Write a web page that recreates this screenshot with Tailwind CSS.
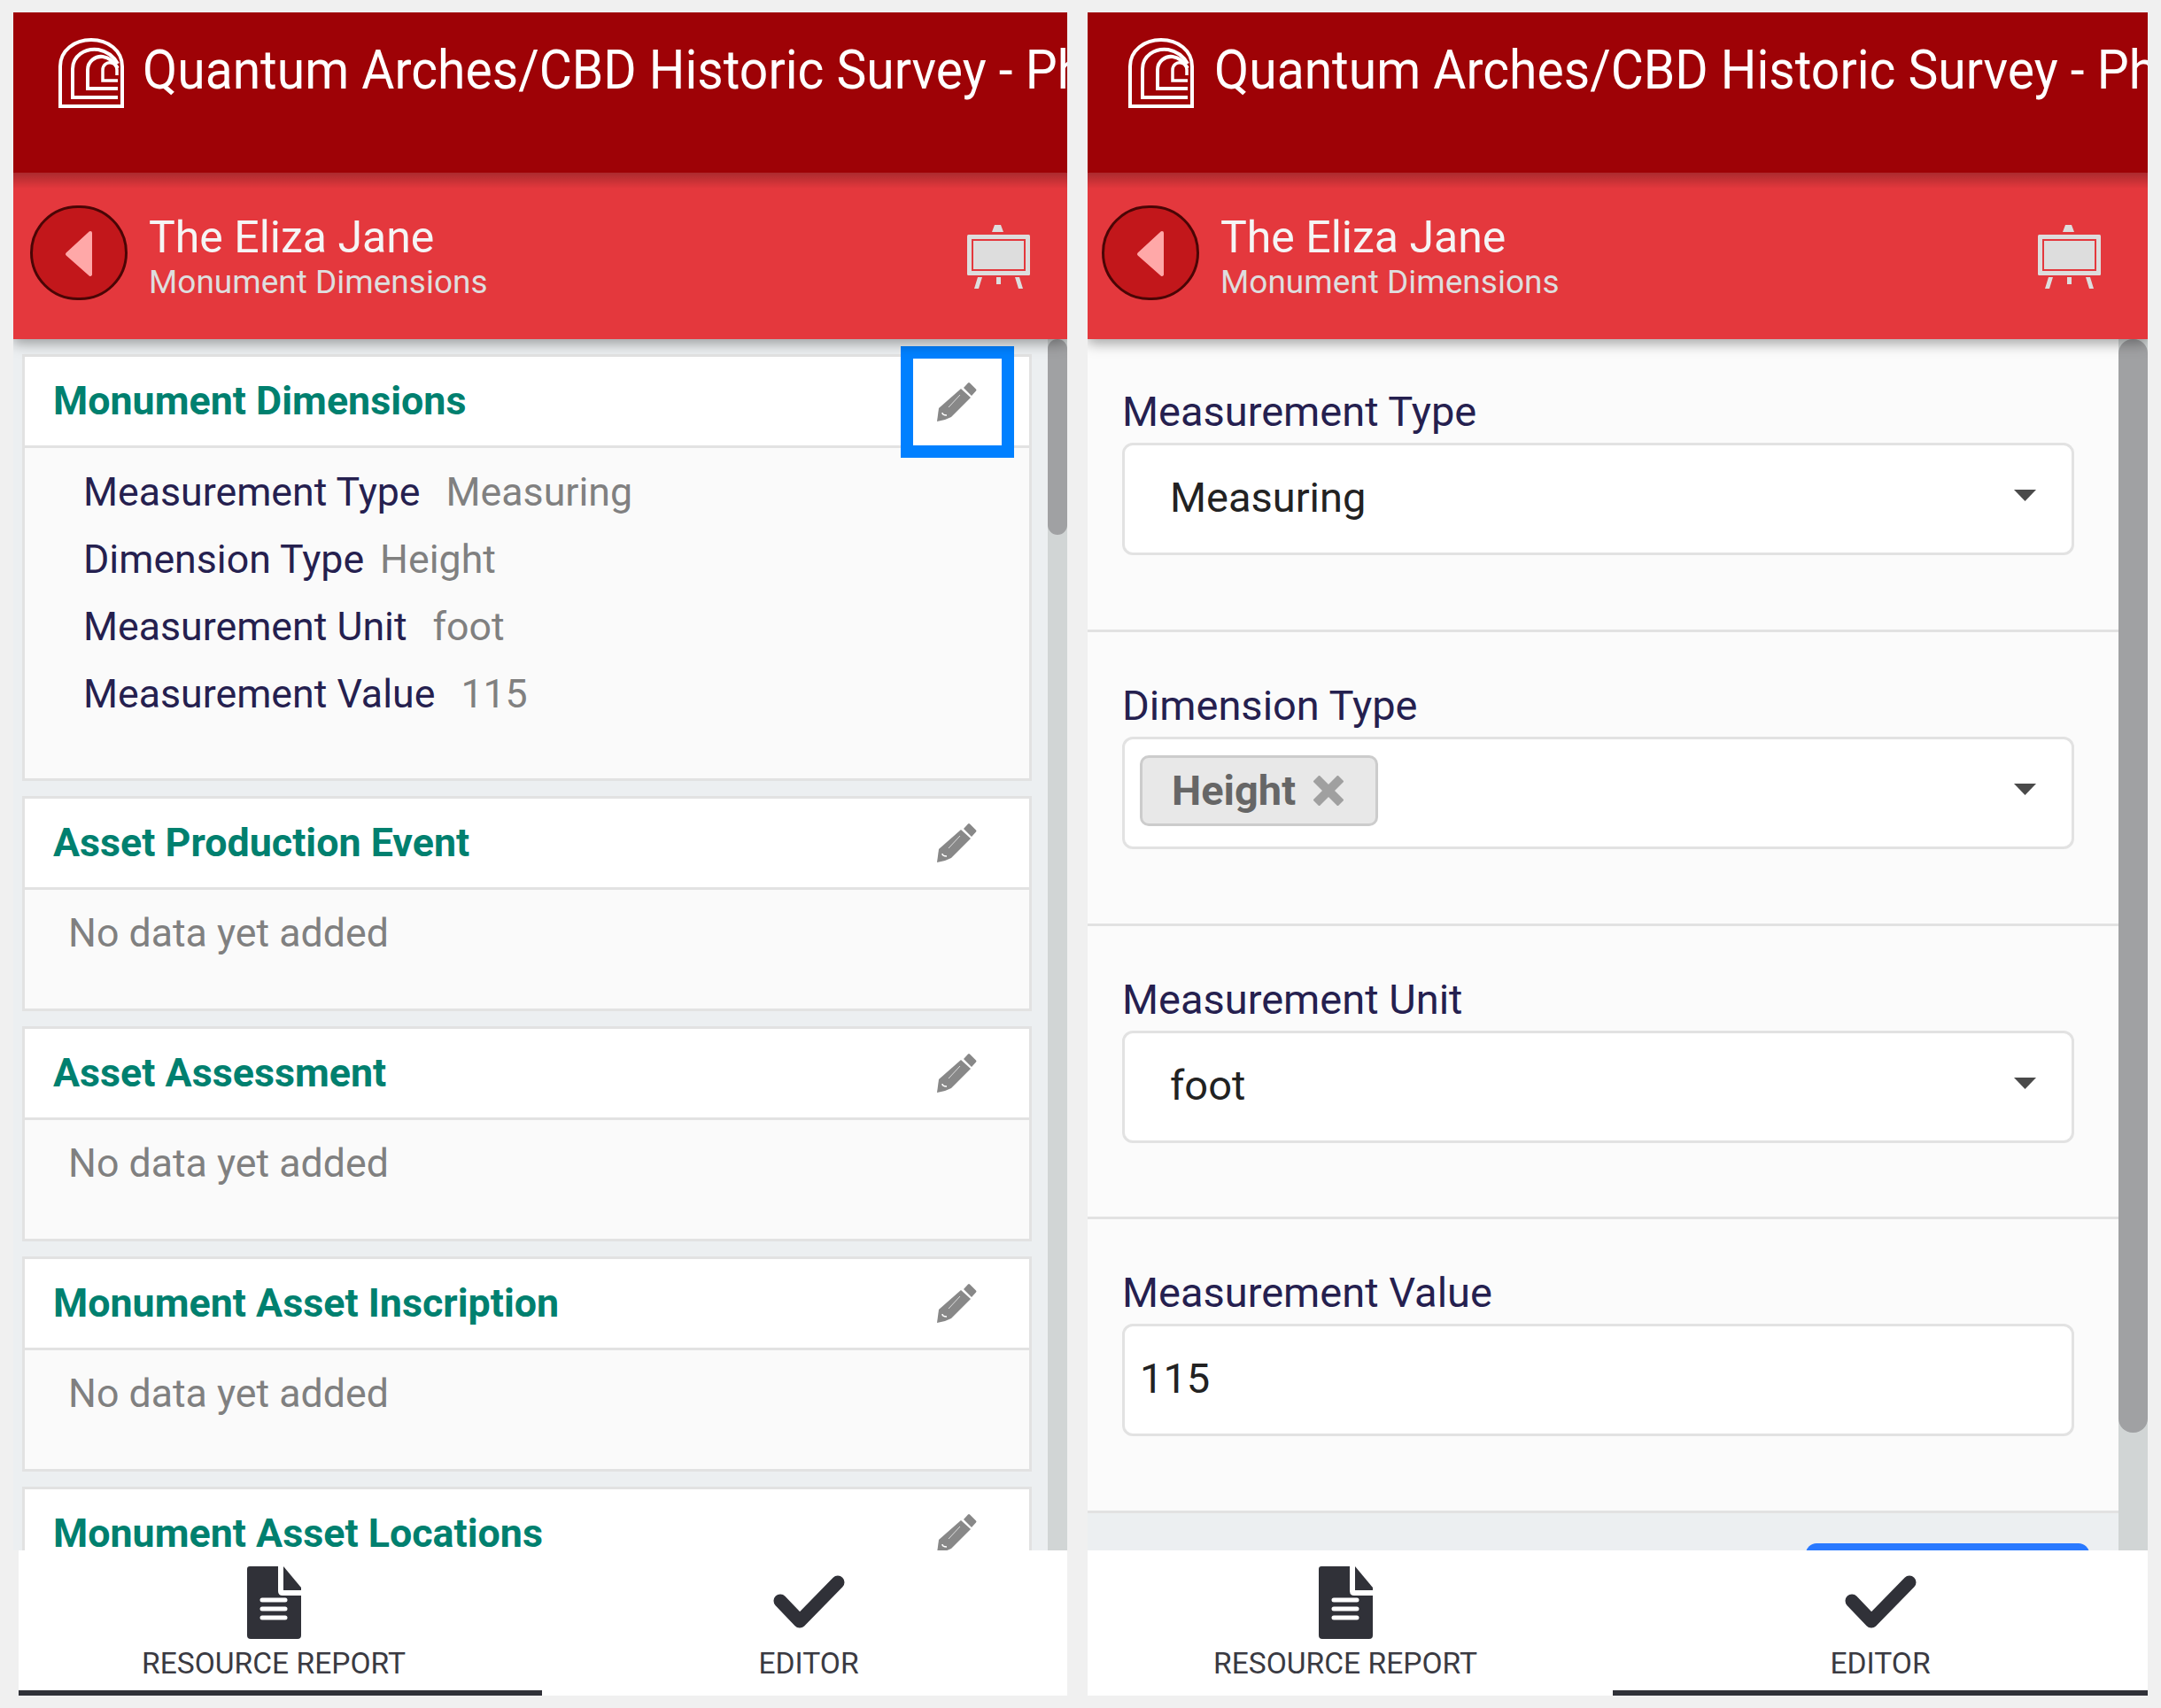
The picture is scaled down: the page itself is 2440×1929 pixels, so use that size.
<!DOCTYPE html>
<html lang="en">

<head>
  <meta charset="UTF-8" />
  <title>Monument Dimensions</title>
  <script src="https://cdn.jsdelivr.net/npm/@tailwindcss/browser@4"></script>
</head>

<body class="bg-[#f0f0f0] font-['Roboto',sans-serif] w-[2440px] h-[1929px] overflow-hidden">

  <!-- shared icons -->
  <svg class="hidden">
    <symbol id="logo" viewBox="0 0 74 79">
      <g fill="none" stroke="#fff">
        <path stroke-width="4" d="M2 77V32C2 14 18 2 37 2S72 14 72 32V77Z" />
        <path stroke-width="4" d="M67 67H16V35C16 20 30 11 45 13C55 15 62 20 67 29" />
        <path stroke-width="4" d="M67 57H33V36C33 26 42 20 50 21C57 22 63 27 67 34" />
        <path stroke-width="3.500" d="M67 48H50V36C50 30 55 27 60 28C64 29 66 32 66 36V42" />
      </g>
    </symbol>
    <symbol id="easel" viewBox="0 0 71 72">
      <path fill="#ddd" d="M31 0H38L41 8H28Z" />
      <rect x="0" y="11" width="71" height="46" rx="1.5" fill="#ddd" />
      <rect x="6" y="17" width="59" height="34" fill="#ddd" stroke="#e4383d" stroke-width="2" />
      <path fill="#ddd" d="M12 59H17L13 72H8ZM33 59H38V67H33ZM54 59H59L63 72H58Z" />
    </symbol>
    <symbol id="pencil" viewBox="0 0 45 45">
      <path fill="#888" d="M30 7L35 1.500Q36 .5 37 1.500L44 8.500Q45 9.500 44 10.500L39 16Z" />
      <path fill="#888" d="M27 8L38 18L16 40L9 43L0 45L2 30Z" />
      <path fill="none" stroke="#ddd" d="M26 15L13 29" />
      <path fill="none" stroke="#fff" stroke-width="1.500" d="M6 35Q6 38 11 38" />
    </symbol>
    <symbol id="caret" viewBox="0 0 25 13">
      <path fill="#4a4a4a" d="M0 0H25L12.500 13Z" />
    </symbol>
    <symbol id="back" viewBox="0 0 110 107">
      <path fill="#ffa8a8" stroke="#ffa8a8" stroke-width="4" stroke-linejoin="round" d="M68 31L42 55L68 78Z" />
    </symbol>
    <symbol id="doc" viewBox="0 0 61 82">
      <path fill="#303138" d="M3 0H35V28Q35 33 40 33H61V78Q61 82 57 82H4Q0 82 0 78V3Q0 0 3 0Z" />
      <path fill="#303138" d="M41 0L61 24V27H41Z" />
      <path stroke="#fff" stroke-width="5" stroke-linecap="round" d="M17 38H43M17 48H43M17 58H43" />
    </symbol>
    <symbol id="check" viewBox="0 0 81 61">
      <path fill="none" stroke="#303138" stroke-width="15" stroke-linejoin="round" stroke-linecap="round" d="M8 29L30 52L73 8" />
    </symbol>
  </svg>

  <div class="flex gap-[23px] pt-[14px] pl-[15px] h-[1915px]">

    <!-- Left panel: monument summary -->
    <div class="w-[1190px] h-full flex flex-col overflow-hidden">
      <div class="bg-[#9e0206] h-[181px] flex items-start pl-[51px] pt-[29px] gap-[21px] shrink-0 relative z-20 overflow-hidden">
        <svg class="w-[74px] h-[79px] shrink-0"><use href="#logo" /></svg>
        <div class="text-white text-[57px] leading-[68px] whitespace-nowrap origin-top-left scale-y-[1.08]">Quantum Arches/CBD Historic Survey - Ph</div>
      </div>
      <div class="bg-[#e4383d] h-[188px] shrink-0 flex items-center pl-[19px] pr-[42px] relative z-10 shadow-[0_5px_14px_rgba(0,0,0,0.35)] before:absolute before:inset-x-0 before:top-0 before:h-[18px] before:bg-gradient-to-b before:from-black/25 before:to-transparent">
        <div class="w-[110px] h-[107px] mb-[7px] rounded-full bg-[#c2171b] border-[3px] border-[#4a0505] shrink-0 flex items-center justify-center">
          <svg class="w-[110px] h-[107px] shrink-0"><use href="#back" /></svg>
        </div>
        <div class="ml-[24px] flex-1 pt-[3px]">
          <div class="text-[#f5f5f5] text-[50px] leading-[56px]">The Eliza Jane</div>
          <div class="text-[#dedede] text-[37px] leading-[45px]">Monument Dimensions</div>
        </div>
        <svg class="w-[71px] h-[72px] mt-[1px] shrink-0"><use href="#easel" /></svg>
      </div>

      <div class="flex-1 min-h-0 flex bg-[#eceff1] overflow-hidden">
        <div class="flex-1 pt-[17px] pl-[10px] pr-[18px] flex flex-col gap-[17px] overflow-hidden">

          <div class="relative shrink-0 h-[482px] border-[3px] border-[#e2e2e2] bg-[#fafafa]">
            <div class="h-[103px] bg-white border-b-[3px] border-[#e2e2e2] flex items-center justify-between pl-[32px] pr-[59px]">
              <span class="text-[#00806f] text-[44.800px] font-bold">Monument Dimensions</span>
              <svg class="w-[45px] h-[45px]"><use href="#pencil" /></svg>
            </div>
            <div class="pl-[66px] pt-[12px] text-[44.700px] leading-[76px]">
              <div class="flex gap-[29px]"><span class="text-[#25204f]">Measurement Type</span><span class="text-[#808080]">Measuring</span></div>
              <div class="flex gap-[18px]"><span class="text-[#25204f]">Dimension Type</span><span class="text-[#808080]">Height</span></div>
              <div class="flex gap-[29px]"><span class="text-[#25204f]">Measurement Unit</span><span class="text-[#808080]">foot</span></div>
              <div class="flex gap-[29px]"><span class="text-[#25204f]">Measurement Value</span><span class="text-[#808080]">115</span></div>
            </div>
            <!-- highlight on the edit button -->
            <div class="absolute top-[-12px] right-[17px] w-[128px] h-[126px] border-[14px] border-[#0080ff]"></div>
          </div>

          <div class="shrink-0 h-[243px] border-[3px] border-[#e2e2e2] bg-[#fafafa]">
            <div class="h-[103px] bg-white border-b-[3px] border-[#e2e2e2] flex items-center justify-between pl-[32px] pr-[59px]">
              <span class="text-[#00806f] text-[44.800px] font-bold">Asset Production Event</span>
              <svg class="w-[45px] h-[45px] mb-[2px]"><use href="#pencil" /></svg>
            </div>
            <div class="pl-[49px] pt-[11px] text-[44.700px] leading-[76px] text-[#808080]">No data yet added</div>
          </div>

          <div class="shrink-0 h-[243px] border-[3px] border-[#e2e2e2] bg-[#fafafa]">
            <div class="h-[103px] bg-white border-b-[3px] border-[#e2e2e2] flex items-center justify-between pl-[32px] pr-[59px]">
              <span class="text-[#00806f] text-[44.800px] font-bold">Asset Assessment</span>
              <svg class="w-[45px] h-[45px] mb-[2px]"><use href="#pencil" /></svg>
            </div>
            <div class="pl-[49px] pt-[11px] text-[44.700px] leading-[76px] text-[#808080]">No data yet added</div>
          </div>

          <div class="shrink-0 h-[243px] border-[3px] border-[#e2e2e2] bg-[#fafafa]">
            <div class="h-[103px] bg-white border-b-[3px] border-[#e2e2e2] flex items-center justify-between pl-[32px] pr-[59px]">
              <span class="text-[#00806f] text-[44.800px] font-bold">Monument Asset Inscription</span>
              <svg class="w-[45px] h-[45px] mb-[2px]"><use href="#pencil" /></svg>
            </div>
            <div class="pl-[49px] pt-[11px] text-[44.700px] leading-[76px] text-[#808080]">No data yet added</div>
          </div>

          <div class="shrink-0 h-[243px] border-[3px] border-[#e2e2e2] bg-[#fafafa]">
            <div class="h-[103px] bg-white border-b-[3px] border-[#e2e2e2] flex items-center justify-between pl-[32px] pr-[59px]">
              <span class="text-[#00806f] text-[44.800px] font-bold">Monument Asset Locations</span>
              <svg class="w-[45px] h-[45px] mb-[2px]"><use href="#pencil" /></svg>
            </div>
          </div>
        </div>

        <!-- scrollbar -->
        <div class="w-[22px] bg-[#d1d5d5] shrink-0">
          <div class="h-[221px] bg-[#a0a1a3] rounded-[12px]"></div>
        </div>
      </div>

      <div class="h-[164px] ml-[6px] bg-white shrink-0 flex relative z-10">
        <div class="w-[591px] border-b-[6px] border-[#303138] flex flex-col items-center pr-[15px] pt-[18px]">
          <svg class="w-[61px] h-[82px]"><use href="#doc" /></svg>
          <div class="text-[#3a3a42] text-[33.600px] leading-[38px] mt-[9px]">RESOURCE REPORT</div>
        </div>
        <div class="flex-1 flex flex-col items-center pl-[9px] pt-[28px]">
          <svg class="w-[81px] h-[61px]"><use href="#check" /></svg>
          <div class="text-[#3a3a42] text-[33.600px] leading-[38px] mt-[20px]">EDITOR</div>
        </div>
      </div>
    </div>

    <!-- Right panel: editor form -->
    <div class="w-[1197px] h-full flex flex-col overflow-hidden">
      <div class="bg-[#9e0206] h-[181px] flex items-start pl-[46px] pt-[29px] gap-[23px] shrink-0 relative z-20 overflow-hidden">
        <svg class="w-[74px] h-[79px] shrink-0"><use href="#logo" /></svg>
        <div class="text-white text-[57px] leading-[68px] whitespace-nowrap origin-top-left scale-y-[1.08]">Quantum Arches/CBD Historic Survey - Ph</div>
      </div>
      <div class="bg-[#e4383d] h-[188px] shrink-0 flex items-center pl-[16px] pr-[53px] relative z-10 shadow-[0_5px_14px_rgba(0,0,0,0.35)] before:absolute before:inset-x-0 before:top-0 before:h-[18px] before:bg-gradient-to-b before:from-black/25 before:to-transparent">
        <div class="w-[110px] h-[107px] mb-[7px] rounded-full bg-[#c2171b] border-[3px] border-[#4a0505] shrink-0 flex items-center justify-center">
          <svg class="w-[110px] h-[107px] shrink-0"><use href="#back" /></svg>
        </div>
        <div class="ml-[24px] flex-1 pt-[3px]">
          <div class="text-[#f5f5f5] text-[50px] leading-[56px]">The Eliza Jane</div>
          <div class="text-[#dedede] text-[37px] leading-[45px]">Monument Dimensions</div>
        </div>
        <svg class="w-[71px] h-[72px] mt-[1px] shrink-0"><use href="#easel" /></svg>
      </div>

      <div class="flex-1 min-h-0 flex bg-[#eceff1] overflow-hidden">
        <div class="flex-1 relative">
          <div class="bg-[#fbfbfb] h-[331px] border-b-[3px] border-[#e2e2e2] pl-[39px] pr-[50px] pt-[55px]">
            <div class="text-[#25204f] text-[47px] leading-[54px] mb-[8px]">Measurement Type</div>
            <div class="h-[127px] bg-white border-[3px] border-[#e2e2e2] rounded-[12px] flex items-center justify-between pl-[51px] pr-[40px]">
              <span class="text-[#222] text-[47px] mb-[3px]">Measuring</span>
              <svg class="w-[25px] h-[13px] mb-[8px]"><use href="#caret" /></svg>
            </div>
          </div>
          <div class="bg-[#fbfbfb] h-[332px] border-b-[3px] border-[#e2e2e2] pl-[39px] pr-[50px] pt-[56px]">
            <div class="text-[#25204f] text-[47px] leading-[54px] mb-[8px]">Dimension Type</div>
            <div class="h-[127px] bg-white border-[3px] border-[#e2e2e2] rounded-[12px] flex items-center justify-between pl-[17px] pr-[40px]">
              <span class="h-[80px] w-[269px] mb-[5px] bg-[#e8e8e8] border-[3px] border-[#cccccc] rounded-[10px] flex items-center gap-[20px] pl-[33px]">
                <span class="text-[#666] text-[47px] font-bold">Height</span>
                <svg class="w-[34px] h-[34px]" viewBox="0 0 34 34"><path stroke="#a0a0a0" stroke-width="10" d="M3 3L31 31M31 3L3 31" /></svg>
              </span>
              <svg class="w-[25px] h-[13px] mb-[8px]"><use href="#caret" /></svg>
            </div>
          </div>
          <div class="bg-[#fbfbfb] h-[331px] border-b-[3px] border-[#e2e2e2] pl-[39px] pr-[50px] pt-[56px]">
            <div class="text-[#25204f] text-[47px] leading-[54px] mb-[8px]">Measurement Unit</div>
            <div class="h-[127px] bg-white border-[3px] border-[#e2e2e2] rounded-[12px] flex items-center justify-between pl-[51px] pr-[40px]">
              <span class="text-[#222] text-[47px] mb-[3px]">foot</span>
              <svg class="w-[25px] h-[13px] mb-[8px]"><use href="#caret" /></svg>
            </div>
          </div>
          <div class="bg-[#fbfbfb] h-[332px] border-b-[3px] border-[#e2e2e2] pl-[39px] pr-[50px] pt-[56px]">
            <div class="text-[#25204f] text-[47px] leading-[54px] mb-[8px]">Measurement Value</div>
            <div class="h-[127px] bg-white border-[3px] border-[#e2e2e2] rounded-[12px] flex items-center pl-[17px]">
              <span class="text-[#222] text-[47px] mb-[3px]">115</span>
            </div>
          </div>
          <div class="pt-[34px] pl-[811px]">
            <div class="w-[320px] h-[40px] bg-[#2979ff] rounded-t-[12px]"></div>
          </div>
        </div>

        <!-- scrollbar -->
        <div class="w-[33px] bg-[#d1d5d5] shrink-0">
          <div class="h-[1235px] bg-[#a0a1a3] rounded-[16px]"></div>
        </div>
      </div>

      <div class="h-[164px] bg-white shrink-0 flex relative z-10">
        <div class="w-[593px] flex flex-col items-center pr-[11px] pt-[18px]">
          <svg class="w-[61px] h-[82px]"><use href="#doc" /></svg>
          <div class="text-[#3a3a42] text-[33.600px] leading-[38px] mt-[9px]">RESOURCE REPORT</div>
        </div>
        <div class="flex-1 border-b-[6px] border-[#303138] flex flex-col items-center pt-[28px]">
          <svg class="w-[81px] h-[61px]"><use href="#check" /></svg>
          <div class="text-[#3a3a42] text-[33.600px] leading-[38px] mt-[20px]">EDITOR</div>
        </div>
      </div>
    </div>
  </div>

</body>

</html>
